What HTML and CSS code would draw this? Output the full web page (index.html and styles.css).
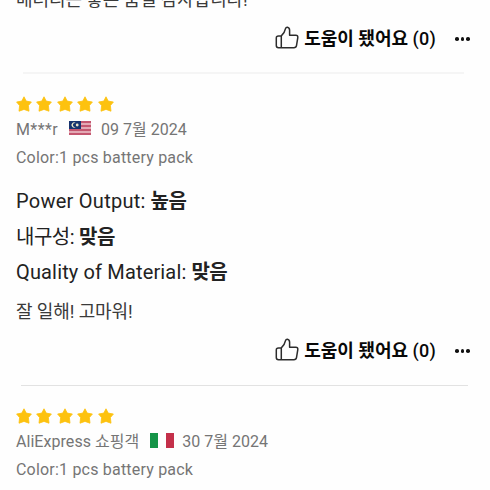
FILE: index.html
```html
<!DOCTYPE html>
<html lang="ko">
<head>
<meta charset="utf-8">
<title>Reviews</title>
<link rel="stylesheet" href="styles.css">
</head>
<body>
<svg class="defs" aria-hidden="true">
  <symbol id="star" viewBox="0 0 16 16"><path d="M8 .8 10.2 5.1 15.4 6 12.4 9.6 13 15.2 8 13.4 3 15.2 3.6 9.6.6 6 5.8 5.1Z"/></symbol>
  <symbol id="thumb" viewBox="0 0 24 24"><path d="M6.3 9.9H3.5Q1.3 9.9 1.3 12V19.6Q1.3 21.7 3.5 21.7H18.9Q21.1 21.7 21.5 19.6L22.8 11.6Q23 9.2 20.8 9.2H14.6V4.3Q14.6 1.5 12.4 1.2 10.9 1.1 10.5 2.6 9.6 7 6.3 9.9V21.7"/></symbol>
</svg>
<main class="reviews">
  <article class="review">
    <p class="comment comment-first">배터리는 좋은 품질 감사합니다!</p>
    <div class="actions">
      <svg class="thumb"><use href="#thumb"/></svg>
      <span class="helpful">도움이 됐어요 <span class="count">(0)</span></span>
      <span class="more"><i></i><i></i><i></i></span>
    </div>
  </article>
  <hr class="divider divider-soft">
  <article class="review">
    <div class="stars"><svg><use href="#star"/></svg><svg><use href="#star"/></svg><svg><use href="#star"/></svg><svg><use href="#star"/></svg><svg><use href="#star"/></svg></div>
    <div class="meta">
      <span class="name-my">M***r</span>
      <svg class="flag flag-my" viewBox="0 0 22 14">
        <rect width="22" height="14" fill="#e3a9b4"/>
        <path d="M0 1H22M0 5H22M0 9H22M0 13H22" stroke="#c45770" stroke-width="2"/>
        <rect width="12" height="8" fill="#17346f"/>
        <path d="M6.7 2A2.6 2.6 0 1 0 6.7 6 2.1 2.1 0 1 1 6.7 2Z" fill="#e9e5c9"/>
        <circle cx="8.2" cy="4" r="1.4" fill="#e9e5c9"/>
      </svg>
      <span class="date">09 7월 2024</span>
    </div>
    <p class="variant">Color:1 pcs battery pack</p>
    <dl class="ratings">
      <div><dt class="power">Power Output:</dt> <dd>높음</dd></div>
      <div><dt class="durability">내구성:</dt> <dd>맞음</dd></div>
      <div><dt class="quality">Quality of Material:</dt> <dd>맞음</dd></div>
    </dl>
    <p class="comment">잘 일해! 고마워!</p>
    <div class="actions">
      <svg class="thumb"><use href="#thumb"/></svg>
      <span class="helpful">도움이 됐어요 <span class="count">(0)</span></span>
      <span class="more"><i></i><i></i><i></i></span>
    </div>
  </article>
  <hr class="divider">
  <article class="review">
    <div class="stars"><svg><use href="#star"/></svg><svg><use href="#star"/></svg><svg><use href="#star"/></svg><svg><use href="#star"/></svg><svg><use href="#star"/></svg></div>
    <div class="meta">
      <span class="name-it">AliExpress 쇼핑객</span>
      <svg class="flag flag-it" viewBox="0 0 24 15">
        <rect width="24" height="15" fill="#fff"/>
        <rect width="8" height="15" fill="#159447"/>
        <rect x="16" width="8" height="15" fill="#c4304a"/>
      </svg>
      <span class="date">30 7월 2024</span>
    </div>
    <p class="variant">Color:1 pcs battery pack</p>
  </article>
</main>
</body>
</html>
```
FILE: styles.css
```css
* { box-sizing: border-box; margin: 0; padding: 0; }
html, body { height: 490px; overflow: hidden; background: #fefefe; }
body { font-family: Roboto, "Noto Sans CJK KR", sans-serif; color: #222; white-space: nowrap; }
.defs { display: none; }
.review { padding: 0 20px 0 16px; }
.comment { height: 26px; margin-top: 8px; font-size: 18px; line-height: 26px; letter-spacing: -0.1px; color: #3a3a3a; }
.comment-first { margin-top: -13px; }
.actions { display: flex; align-items: center; justify-content: flex-end; height: 26px; margin-top: 13px; }
.comment-first + .actions { margin-top: 13px; }
.thumb { width: 24px; height: 24px; margin: 0 5px 2px 0; fill: none; stroke: #2c2c2c; stroke-width: 1.5; stroke-linejoin: round; }
.helpful { width: 131px; font-size: 18px; line-height: 26px; font-weight: 700; color: #080808; }
.count { font-weight: 500; letter-spacing: 0.2px; }
.more { display: flex; gap: 2px; margin-left: 20px; }
.more i { width: 3.6px; height: 3.6px; border-radius: 50%; background: #111; }
.divider { height: 1px; margin: 21px 22px 0 21px; border: 0; background: #e2e2e2; }
.divider-soft { height: 2px; margin: 20px 26px 0 23px; background: #f5f5f5; }
.divider + .review { padding-top: 22px; }
.stars { display: flex; gap: 4.4px; height: 16px; }
.stars svg { width: 16px; height: 16px; fill: #fdc20f; stroke: #fdc20f; stroke-width: 0.8; stroke-linejoin: round; }
.meta { display: flex; align-items: center; height: 28px; margin-top: 4px; font-size: 16px; line-height: 28px; color: #757575; }
.name-my { letter-spacing: 0.4px; }
.name-it { letter-spacing: 0.05px; }
.flag { display: block; }
.flag-my { width: 22px; height: 14px; margin: 0 10px 5px 11px; }
.flag-it { width: 24px; height: 15px; margin: 0 8px 3px 11px; }
.variant { height: 28px; font-size: 16px; line-height: 28px; letter-spacing: 0.2px; color: #757575; }
.ratings { margin-top: 12px; font-size: 20px; line-height: 35.5px; color: #222; }
.ratings div { height: 35.5px; }
.ratings dt, .ratings dd { display: inline; }
.ratings dd { font-weight: 700; letter-spacing: -0.5px; }
.power { letter-spacing: 0.26px; }
.durability { letter-spacing: -0.5px; }
.quality { letter-spacing: 0.15px; }
.ratings + .comment { margin-top: 8.5px; }
```
